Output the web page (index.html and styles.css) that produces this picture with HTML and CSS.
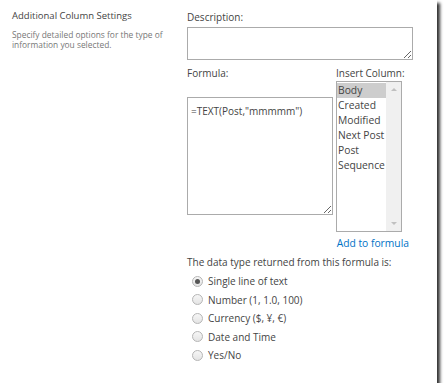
FILE: index.html
```html
<!DOCTYPE html>
<html lang="en">
  <head>
    <meta charset="UTF-8" />
    <meta name="viewport" content="width=device-width, initial-scale=1.0" />
    <title>Additional Column Settings</title>
    <link rel="stylesheet" href="styles.css">
  </head>
  <body>
    <div class="frame">
      <div class="section">
        <div class="section-info">
          <h3>Additional Column Settings</h3>
          <p>Specify detailed options for the type of information you selected.</p>
        </div>

        <div class="section-body">
          <label class="field-label" for="description">Description:</label>
          <textarea id="description" class="description-box"></textarea>

          <div class="formula-row">
            <div class="formula-col">
              <label class="field-label" for="formula">Formula:</label>
              <textarea id="formula" class="formula-box">=TEXT(Post,"mmmmm")</textarea>
            </div>
            <div class="column-col">
              <div class="field-label">Insert Column:</div>
              <div class="listbox">
                <ul class="listbox-items">
                  <li class="selected">Body</li>
                  <li>Created</li>
                  <li>Modified</li>
                  <li>Next Post</li>
                  <li>Post</li>
                  <li>Sequence</li>
                </ul>
                <div class="scrollbar">
                  <span class="arrow up"></span>
                  <span class="arrow down"></span>
                </div>
              </div>
              <a class="add-link" href="#">Add to formula</a>
            </div>
          </div>

          <div class="return-type">The data type returned from this formula is:</div>
          <ul class="radio-list">
            <li><span class="radio checked"></span>Single line of text</li>
            <li><span class="radio"></span>Number (1, 1.0, 100)</li>
            <li><span class="radio"></span>Currency ($, ¥, €)</li>
            <li><span class="radio"></span>Date and Time</li>
            <li><span class="radio"></span>Yes/No</li>
          </ul>
        </div>
      </div>
    </div>
  </body>
</html>
```

FILE: styles.css
```css
body {
  margin: 0;
  background: white;
  font-family: "Open Sans", "Noto Sans", sans-serif;
  color: #444;
}
.frame {
  width: 437px;
  height: 383px;
  background: white;
  box-shadow: 3px 3px 3px rgba(0, 0, 0, 0.8);
}
.section {
  display: flex;
}
.section-info {
  width: 175px;
  flex-shrink: 0;
  padding: 9px 0 0 12px;
}
.section-info h3 {
  margin: 0;
  font-size: 9.5px;
  font-weight: normal;
  line-height: 13px;
  color: #444;
}
.section-info p {
  margin: 8px 0 0;
  width: 160px;
  font-size: 8.4px;
  line-height: 9.5px;
  color: #777;
}
.section-body {
  width: 226px;
  padding-top: 10px;
  font-size: 10px;
}
.field-label {
  display: block;
  line-height: 14px;
  white-space: nowrap;
}
textarea {
  display: block;
  box-sizing: border-box;
  margin: 0;
  border: 1px solid #ababab;
  font-family: inherit;
  font-size: 10px;
  color: #444;
  padding: 4px 3px;
  resize: both;
  outline: none;
}
.description-box {
  width: 226px;
  height: 33px;
  margin-top: 3px;
}
.formula-row {
  display: flex;
  gap: 3px;
  margin-top: 6px;
}
.formula-col {
  width: 146px;
}
.formula-box {
  width: 146px;
  height: 118px;
  margin-top: 17px;
  line-height: 13px;
  padding-top: 7px;
}
.column-col {
  width: 73px;
  text-align: right;
}
.column-col .field-label {
  text-align: left;
}
.listbox {
  display: flex;
  width: 66px;
  height: 151px;
  box-sizing: border-box;
  border: 1px solid #ababab;
  margin-top: 1px;
  text-align: left;
}
.listbox-items {
  flex: 1;
  margin: 0;
  padding: 1px 0 0;
  list-style: none;
  font-size: 10.3px;
  line-height: 15px;
}
.listbox-items li {
  padding-left: 1px;
  white-space: nowrap;
}
.listbox-items .selected {
  background: #cdcdcd;
}
.scrollbar {
  width: 15px;
  flex-shrink: 0;
  background: #f0f0f0;
  display: flex;
  flex-direction: column;
  justify-content: space-between;
  align-items: center;
  padding: 6px 0;
}
.arrow {
  width: 0;
  height: 0;
  border-left: 3px solid transparent;
  border-right: 3px solid transparent;
}
.arrow.up {
  border-bottom: 3px solid #c0c0c0;
}
.arrow.down {
  border-top: 3px solid #c0c0c0;
}
.add-link {
  display: inline-block;
  margin-top: 4px;
  color: #0072c6;
  text-decoration: none;
  font-size: 10.3px;
  line-height: 14px;
  white-space: nowrap;
}
.return-type {
  margin-top: 5px;
  line-height: 14px;
  white-space: nowrap;
}
.radio-list {
  list-style: none;
  margin: 3px 0 0;
  padding: 0 0 0 5px;
}
.radio-list li {
  display: flex;
  align-items: center;
  height: 18.5px;
}
.radio {
  width: 11px;
  height: 11px;
  box-sizing: border-box;
  border: 1px solid #b5b5b5;
  border-radius: 50%;
  background: linear-gradient(#f6f6f6, #e4e4e4);
  margin-right: 5px;
  display: flex;
  align-items: center;
  justify-content: center;
}
.radio.checked::after {
  content: "";
  width: 5px;
  height: 5px;
  border-radius: 50%;
  background: #555;
}
```
